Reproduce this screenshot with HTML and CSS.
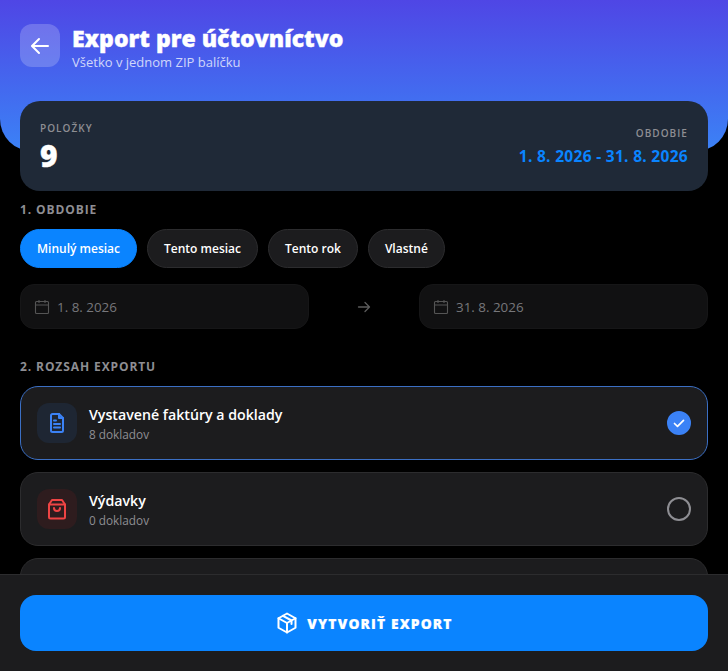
FILE: index.html
```html
<!DOCTYPE html>
<html lang="sk">
<head>
<meta charset="utf-8">
<title>Export pre účtovníctvo</title>
<link rel="stylesheet" href="styles.css">
</head>
<body>
<div class="app">
  <header class="hero">
    <button class="back" aria-label="Späť">
      <svg viewBox="0 0 24 24" width="24" height="24" fill="none" stroke="#fff" stroke-width="2" stroke-linecap="round" stroke-linejoin="round"><path d="M20 12H4.5"/><path d="M11 5l-7 7 7 7"/></svg>
    </button>
    <div class="hero-text">
      <h1>Export pre účtovníctvo</h1>
      <p>Všetko v jednom ZIP balíčku</p>
    </div>
  </header>
  <main class="content">
    <section class="summary">
      <div>
        <div class="sum-label">POLOŽKY</div>
        <div class="sum-count">9</div>
      </div>
      <div class="sum-right">
        <div class="sum-label">OBDOBIE</div>
        <div class="sum-period">1. 8. 2026 - 31. 8. 2026</div>
      </div>
    </section>

    <h2 class="section-title first">1. OBDOBIE</h2>
    <div class="chips">
      <button class="chip active">Minulý mesiac</button>
      <button class="chip">Tento mesiac</button>
      <button class="chip">Tento rok</button>
      <button class="chip">Vlastné</button>
    </div>
    <div class="dates">
      <div class="date">
        <svg viewBox="0 0 16 16" width="16" height="16" fill="none" stroke="#555" stroke-width="1.1"><rect x="1.5" y="2.5" width="13" height="12" rx="1"/><path d="M1.5 6h13M5 1v3M11 1v3"/></svg>
        <span>1. 8. 2026</span>
      </div>
      <svg class="date-arrow" viewBox="0 0 14 14" width="14" height="14" fill="none" stroke="#5c5c5c" stroke-width="1.3" stroke-linecap="round" stroke-linejoin="round"><path d="M1.5 7h11M8 2.5L12.5 7 8 11.5"/></svg>
      <div class="date">
        <svg viewBox="0 0 16 16" width="16" height="16" fill="none" stroke="#555" stroke-width="1.1"><rect x="1.5" y="2.5" width="13" height="12" rx="1"/><path d="M1.5 6h13M5 1v3M11 1v3"/></svg>
        <span>31. 8. 2026</span>
      </div>
    </div>

    <h2 class="section-title second">2. ROZSAH EXPORTU</h2>
    <div class="options">
      <div class="option selected">
        <div class="opt-icon blue">
          <svg viewBox="0 0 24 24" width="24" height="24" fill="none" stroke="#3b82f6" stroke-width="2" stroke-linecap="round" stroke-linejoin="round"><path d="M14 3H7.500A1.500 1.500 0 0 0 6 4.500v15A1.500 1.500 0 0 0 7.500 21h9a1.500 1.500 0 0 0 1.500-1.500V7z"/><path d="M14 3v4h4"/><path d="M9 9.500h2M9 13h6M9 16.500h6"/></svg>
        </div>
        <div class="opt-text">
          <div class="opt-title">Vystavené faktúry a doklady</div>
          <div class="opt-sub">8 dokladov</div>
        </div>
        <span class="radio on">
          <svg viewBox="0 0 14 14" width="14" height="14" fill="none" stroke="#fff" stroke-width="1.700" stroke-linecap="round" stroke-linejoin="round"><path d="M2.500 7.500l3 2.800 6-6"/></svg>
        </span>
      </div>
      <div class="option">
        <div class="opt-icon red">
          <svg viewBox="0 0 24 24" width="24" height="24" fill="none" stroke="#ef4444" stroke-width="2" stroke-linecap="round" stroke-linejoin="round"><path d="M7 3h10l3 4.500V20a1.500 1.500 0 0 1-1.500 1.500h-13A1.500 1.500 0 0 1 4 20V7.500z"/><path d="M4 7.500h16"/><path d="M9 11a3 3 0 0 0 6 0"/></svg>
        </div>
        <div class="opt-text">
          <div class="opt-title">Výdavky</div>
          <div class="opt-sub">0 dokladov</div>
        </div>
        <span class="radio"></span>
      </div>
      <div class="option"></div>
    </div>
  </main>
  <footer class="footer">
    <button class="cta">
      <svg viewBox="0 0 24 24" width="24" height="24" fill="none" stroke="#fff" stroke-width="2" stroke-linecap="round" stroke-linejoin="round"><path d="M12 2.500l8.500 4.750v9.500L12 21.500l-8.500-4.750v-9.500z"/><path d="M3.500 7.250L12 12l8.500-4.750"/><path d="M12 12v9.500"/><path d="M8 4.800l8.500 4.700v3.500"/></svg>
      <span>VYTVORIŤ EXPORT</span>
    </button>
  </footer>
</div>
</body>
</html>
```
FILE: styles.css
```css
* { box-sizing: border-box; }
html, body { margin: 0; height: 100%; background: #000; }
body { font-family: "Open Sans", "Noto Sans", sans-serif; color: #fff; overflow: hidden; }
button { font-family: inherit; border: 0; cursor: pointer; }

.app { position: relative; height: 671px; overflow: hidden; }

.hero {
  height: 151px;
  padding: 24px 20px 0;
  display: flex;
  align-items: flex-start;
  gap: 12px;
  background: linear-gradient(180deg, #4f46e5 0%, #3b82f6 100%);
  border-radius: 0 0 32px 32px;
}
.back {
  width: 40px; height: 43px;
  border-radius: 12px;
  background: rgba(255,255,255,.2);
  display: flex; align-items: center; justify-content: center;
  padding: 0;
  flex: none;
}
.hero-text h1 { margin: 0; font-size: 23px; line-height: 28px; font-weight: 800; -webkit-text-stroke: .4px #fff; }
.hero-text p { margin: 1px 0 0; font-size: 13px; line-height: 18px; color: rgba(255,255,255,.75); }

.content { padding: 0 20px; margin-top: -50px; }

.summary {
  height: 90px;
  background: #1f2937;
  border-radius: 20px;
  padding: 21px 20px 0;
  display: flex;
  justify-content: space-between;
  align-items: flex-start;
}
.sum-label { font-size: 10px; line-height: 13px; font-weight: 600; letter-spacing: 1.05px; color: #8e8e93; }
.sum-count { font-size: 30px; line-height: 34px; font-weight: 800; margin-top: 4px; -webkit-text-stroke: .4px #fff; }
.sum-right { text-align: right; padding-top: 5px; }
.sum-period { font-size: 15.5px; line-height: 20px; font-weight: 700; color: #0a84ff; margin-top: 6px; letter-spacing: .3px; }

.section-title { margin: 0; font-size: 12px; line-height: 16px; font-weight: 700; letter-spacing: .9px; color: #8e8e93; }
.section-title.first { margin-top: 11px; }
.section-title.second { margin-top: 30px; }

.chips { display: flex; gap: 10px; margin-top: 11px; }
.chip {
  height: 39px;
  padding: 0 16px;
  border-radius: 20px;
  background: #1c1c1e;
  border: 1px solid #2c2c2e;
  color: #fff;
  font-size: 12px;
  font-weight: 600;
}
.chip.active { background: #0a84ff; border-color: #0a84ff; }

.dates { display: flex; align-items: center; margin-top: 16px; }
.date {
  flex: 1;
  height: 45px;
  background: #111112;
  border: 1px solid #161617;
  border-radius: 14px;
  padding: 0 13px;
  display: flex;
  align-items: center;
  gap: 7px;
  font-size: 13.4px;
  color: #77777b;
}
.date-arrow { margin: 0 48px; flex: none; }

.options { display: flex; flex-direction: column; gap: 12px; margin-top: 11px; }
.option {
  height: 74px;
  flex: none;
  background: #1c1c1e;
  border: 1px solid #2c2c2e;
  border-radius: 18px;
  padding: 0 16px;
  display: flex;
  align-items: center;
  gap: 12px;
}
.option.selected { border-color: #3b6fc4; }
.opt-icon { width: 40px; height: 40px; border-radius: 12px; display: flex; align-items: center; justify-content: center; flex: none; }
.opt-icon.blue { background: #1e2633; }
.opt-icon.red { background: #2e1c1e; }
.opt-text { flex: 1; padding-top: 2px; }
.opt-title { font-size: 14.2px; line-height: 20px; font-weight: 600; }
.opt-sub { font-size: 11.8px; line-height: 17px; color: #8e8e93; margin-top: 1px; }
.radio {
  width: 24px; height: 24px;
  border-radius: 50%;
  border: 2px solid #8e8e93;
  flex: none;
  display: flex; align-items: center; justify-content: center;
}
.radio.on { background: #3b82f6; border-color: #3b82f6; }

.footer {
  position: absolute;
  left: 0; right: 0; bottom: 0;
  height: 97px;
  background: #1c1c1e;
  border-top: 1px solid #2c2c2e;
  padding: 20px 20px 0;
}
.cta {
  width: 100%;
  height: 56px;
  border-radius: 16px;
  background: #0a84ff;
  color: #fff;
  display: flex;
  align-items: center;
  justify-content: center;
  gap: 8px;
  font-size: 13.8px;
  font-weight: 800;
  letter-spacing: 1.15px;
  -webkit-text-stroke: .2px #fff;
}
.cta span { padding-top: 1px; }
```
